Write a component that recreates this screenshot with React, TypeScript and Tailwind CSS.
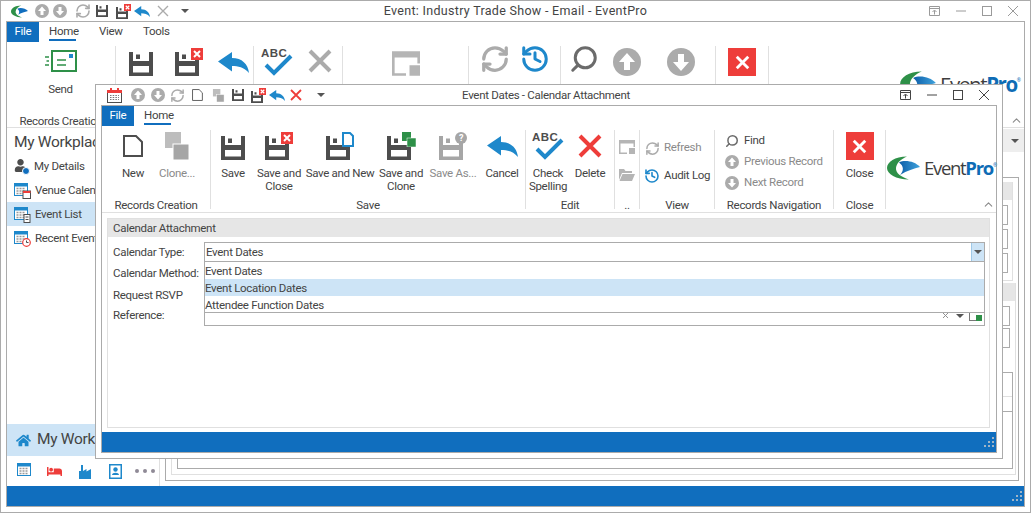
import React from 'react'
import { RefreshCw, History, Search, ChevronUp, X } from 'lucide-react'
import { FaBed, FaHome, FaUser } from 'react-icons/fa'

const BLUE = '#1e88cb'
const DARK = '#4d4d4d'
const GRAY = '#ababab'
const RED = '#ee3d3a'
const GREEN = '#2e9048'

/* ---------- icons ---------- */

function SaveIcon({ color = DARK, size = 24, className = '' }: { color?: string; size?: number; className?: string }) {
  return (
    <svg width={size} height={size} viewBox="0 0 24 24" className={className}>
      <path
        fillRule="evenodd"
        fill={color}
        d="M0 0H24V24H0Z M4 0V9H20V0Z M4 14V20.5H20V14Z"
      />
      <rect x="7" y="2.5" width="4" height="4.5" fill={color} />
    </svg>
  )
}

function SaveBadge({ badge, size = 24, color = DARK }: { badge: React.ReactNode; size?: number; color?: string }) {
  const wrap = size === 24 ? 'relative w-[28px] h-[28px] flex items-end' : 'relative w-[15px] h-[15px] flex items-end'
  return (
    <div className={wrap}>
      <SaveIcon size={size} color={color} />
      {badge}
    </div>
  )
}

function RedBox({ big = false }: { big?: boolean }) {
  const cls = big ? 'absolute right-0 top-0 w-[12px] h-[12px]' : 'absolute right-0 top-0 w-[7px] h-[7px]'
  return (
    <svg viewBox="0 0 12 12" className={cls}>
      <rect width="12" height="12" fill={RED} />
      <path d="M3 3L9 9M9 3L3 9" stroke="#fff" strokeWidth="2" />
    </svg>
  )
}

function CancelArrow({ w = 31, h = 21 }: { w?: number; h?: number }) {
  return (
    <svg width={w} height={h} viewBox="0 0 31 21">
      <path fill={BLUE} d="M0 9.500L14 0V6C24 6 30 12 31 21C26 15 20 14 14 14V19.500Z" />
    </svg>
  )
}

function CrossIcon({ color = RED, size = 24, stroke = 4 }: { color?: string; size?: number; stroke?: number }) {
  return (
    <svg width={size} height={size} viewBox="0 0 24 24">
      <path d="M2 2L22 22M22 2L2 22" stroke={color} strokeWidth={stroke} fill="none" />
    </svg>
  )
}

function CheckSpell() {
  return (
    <svg width="32" height="29" viewBox="0 0 32 29">
      <text x="0" y="10" fontFamily="'Liberation Sans', sans-serif" fontWeight="700" fontSize="11.5" letterSpacing="0.4" fill={DARK}>ABC</text>
      <path d="M5 18L13 26L30 9" stroke={BLUE} strokeWidth="4" fill="none" />
    </svg>
  )
}

function DocIcon({ size = 22, sw = 2 }: { size?: number; sw?: number }) {
  return (
    <svg width={(size * 20) / 22} height={size} viewBox="0 0 20 22">
      <path d="M1 1H13L19 7V21H1Z" stroke={DARK} strokeWidth={sw} fill="none" />
    </svg>
  )
}

function CloneIcon({ size = 28 }: { size?: number }) {
  return (
    <svg width={size} height={size} viewBox="0 0 24 28">
      <rect x="0" y="0" width="16" height="16" fill="#bdbdbd" />
      <rect x="8" y="12" width="16" height="16" fill="#a6a6a6" stroke="#fff" strokeWidth="1" />
    </svg>
  )
}

function RoundArrow({ up = true, size = 14 }: { up?: boolean; size?: number }) {
  return (
    <svg width={size} height={size} viewBox="0 0 14 14" className="shrink-0">
      <circle cx="7" cy="7" r="7" fill={GRAY} />
      <path fill="#fff" d={up ? 'M7 2.500L11 7H8.500V11H5.500V7H3Z' : 'M7 11.500L11 7H8.500V3H5.500V7H3Z'} />
    </svg>
  )
}

function WindowPane({ w = 16, h = 14 }: { w?: number; h?: number }) {
  return (
    <svg width={w} height={h} viewBox="0 0 16 14">
      <path fill="#b5b5b5" fillRule="evenodd" d="M0 0H16V7H14.500V3.500H1.500V12.500H8V14H0Z" />
      <rect x="10" y="8" width="6" height="6" fill="#b5b5b5" />
    </svg>
  )
}

function FolderIcon() {
  return (
    <svg width="16" height="13" viewBox="0 0 16 13">
      <path fill="#b5b5b5" d="M0 1H5L6.500 3H13V5H3L0 12Z M3.500 6H16L13 13H0.500Z" />
    </svg>
  )
}

function WinControls({ color, className = '' }: { color: string; className?: string }) {
  return (
    <div className={`flex items-center ${className}`}>
      <svg width="11" height="10" viewBox="0 0 11 10" className="mr-[16px]">
        <path d="M.5 .5H10.500V9.500H.5Z M.5 2.500H10.500 M5.500 8.500V4.500 M3.500 6L5.500 4L7.500 6" stroke={color} fill="none" />
      </svg>
      <svg width="10" height="2" viewBox="0 0 10 2" className="mr-[16px] w-[10px]">
        <path d="M0 1H10" stroke={color} />
      </svg>
      <svg width="10" height="10" viewBox="0 0 10 10" className="mr-[16px] w-[10px] h-[10px]">
        <rect x=".5" y=".5" width="9" height="9" stroke={color} fill="none" />
      </svg>
      <svg width="10" height="10" viewBox="0 0 10 10" className="w-[10px] h-[10px]">
        <path d="M0 0L10 10M10 0L0 10" stroke={color} fill="none" />
      </svg>
    </div>
  )
}

function CalIcon({ badge }: { badge?: 'date' | 'doc' | 'clock' }) {
  return (
    <svg width="17" height="16" viewBox="0 0 17 16">
      <rect x=".5" y=".5" width="13" height="12" fill="#fff" stroke={BLUE} />
      <rect x="1" y="1" width="12" height="2.500" fill={BLUE} />
      <path d="M2.500 5.500H11.500M2.500 8H11.500M2.500 10.500H11.500" stroke="#9a9a9a" strokeWidth="1.400" strokeDasharray="2 1" />
      {badge === 'date' && (
        <>
          <rect x="9" y="8" width="7.500" height="7.500" fill="#fff" stroke={DARK} />
          <rect x="9" y="8" width="7.500" height="2" fill={RED} />
        </>
      )}
      {badge === 'doc' && (
        <>
          <rect x="10" y="7.500" width="6" height="8" fill="#fff" stroke={DARK} />
          <path d="M11.500 10H14.500M11.500 12.500H14.500" stroke={DARK} />
        </>
      )}
      {badge === 'clock' && (
        <>
          <circle cx="12.500" cy="11.500" r="3.800" fill="#fff" stroke={RED} strokeWidth="1.200" />
          <path d="M12.500 9.500V11.500H14.500" stroke={DARK} fill="none" />
        </>
      )}
    </svg>
  )
}

function DialogCal() {
  return (
    <svg width="15" height="15" viewBox="0 0 15 15">
      <rect x=".5" y="2.500" width="14" height="12" fill="#fff" stroke={DARK} />
      <rect x="0" y="2" width="15" height="3" fill={RED} />
      <rect x="3" y="0" width="2" height="4" fill={RED} />
      <rect x="10" y="0" width="2" height="4" fill={RED} />
      <path d="M3 7.500H12M3 9.500H12M3 11.500H12" stroke="#777" strokeDasharray="1.500 1.200" />
    </svg>
  )
}

function Logo({ big = false }: { big?: boolean }) {
  return (
    <div className="flex items-center tracking-normal" style={{ fontFamily: "'Open Sans', sans-serif" }}>
      <svg width={big ? 36 : 33} height={big ? 26 : 24} viewBox="0 0 33 24">
        <defs>
          <linearGradient id={big ? 'lgb' : 'lgs'} x1="0" y1="0" x2="1" y2="0">
            <stop offset="0" stopColor="#0d5ea8" />
            <stop offset="1" stopColor="#3fa2dc" />
          </linearGradient>
        </defs>
        <path fill={GREEN} d="M20 .5C8 .5 0 6 0 12C0 18 9 23.500 22 23.500C14 21 8.500 17 9 12C9.500 7 14 3 20 .5Z" />
        <path fill={`url(#${big ? 'lgb' : 'lgs'})`} d="M12 6.500C18 3.500 28 5.500 33 11C27 12.500 20 14.500 13 19C17 15 17 10 12 6.500Z" />
      </svg>
      <span className={big ? 'ml-[4px] text-[20.5px] leading-none tracking-[-1.4px] text-[#3e3e3e]' : 'ml-[4px] text-[18.5px] leading-none tracking-[-1.3px] text-[#3e3e3e]'}>
        Event<span className="font-bold text-[#0e6cb5]">Pro</span>
      </span>
      <span className="text-[5px] self-start mt-[6px] text-[#0e6cb5]">®</span>
    </div>
  )
}

function ChevronArrow({ className = '' }: { className?: string }) {
  return <div className={`w-0 h-0 border-x-[4px] border-x-transparent border-t-[4px] border-t-[#555] ${className}`} />
}

/* ---------- ribbon parts ---------- */

function BigButton({ icon, label, width, disabled }: { icon: React.ReactNode; label?: React.ReactNode; width: string; disabled?: boolean }) {
  return (
    <div className={`flex flex-col items-center shrink-0 ${width}`}>
      <div className="h-[30px] flex items-end justify-center">{icon}</div>
      <div className={`mt-[7px] leading-[13px] text-center whitespace-nowrap ${disabled ? 'text-[#8a8a8a]' : ''}`}>{label}</div>
    </div>
  )
}

function Group({ label, width, children, noBorder }: { label?: string; width: string; children: React.ReactNode; noBorder?: boolean }) {
  return (
    <div className={`flex flex-col h-[79px] shrink-0 ${width} ${noBorder ? '' : 'border-r border-[#e0e0e0]'}`}>
      <div className="flex-1 flex min-h-0">{children}</div>
      <div className="h-[13px] leading-[13px] -mb-[3px] text-center whitespace-nowrap">{label}</div>
    </div>
  )
}

function SmallRow({ icon, label, disabled, h }: { icon: React.ReactNode; label: string; disabled?: boolean; h: string }) {
  return (
    <div className={`flex items-center ${h} ${disabled ? 'text-[#8a8a8a]' : ''}`}>
      <div className="w-[24px] flex justify-center shrink-0">{icon}</div>
      <span className="whitespace-nowrap">{label}</span>
    </div>
  )
}

function TabBar({ tabs }: { tabs: { label: string; w: string; active?: boolean }[] }) {
  return (
    <div className="flex h-[20px] shrink-0">
      <div className="w-[32px] bg-[#106ebe] text-white flex items-center justify-center">File</div>
      <div className="flex ml-[10px]">
        {tabs.map((t) => (
          <div key={t.label} className={`${t.w} flex flex-col items-start`}>
            <span className="leading-[18px] h-[17px]">{t.label}</span>
            {t.active && <div className="h-[2px] w-[27px] bg-[#106ebe]" />}
          </div>
        ))}
      </div>
    </div>
  )
}

/* ---------- background window ---------- */

function RedClose() {
  return (
    <div className="w-[28px] h-[28px] bg-[#ee3d3a] flex items-center justify-center">
      <X size={23} color="#fff" strokeWidth={3} strokeLinecap="butt" />
    </div>
  )
}

function OuterRibbon() {
  return (
    <div className="flex h-[86px] pt-[4px] shrink-0 border-b border-[#e0e0e0] relative">
      <Group label="Records Creation" width="w-[109px]">
        <BigButton
          width="w-[107px]"
          label="Send"
          icon={
            <svg width="32" height="22" viewBox="0 0 32 22" className="mb-[4px]">
              <rect x="7" y="1" width="24" height="20" fill="none" stroke={GREEN} strokeWidth="2" />
              <path d="M0 7H4M1.500 11H4M0 15H4M12 10H21M12 15H21" stroke={GREEN} strokeWidth="1.500" />
              <rect x="24" y="4" width="4" height="4" fill={BLUE} />
            </svg>
          }
        />
      </Group>
      <Group width="w-[138px]">
        <div className="pl-[2px] flex">
          <BigButton width="w-[46px]" icon={<SaveIcon />} />
          <BigButton width="w-[50px]" icon={<SaveBadge badge={<RedBox big />} />} />
          <BigButton width="w-[38px]" icon={<div className="mb-[3px]"><CancelArrow /></div>} />
        </div>
      </Group>
      <Group width="w-[89px]">
        <div className="flex">
          <BigButton width="w-[45px]" icon={<CheckSpell />} />
          <BigButton width="w-[41px]" icon={<div className="mb-[3px]"><CrossIcon color={GRAY} /></div>} />
        </div>
      </Group>
      <Group width="w-[126px]">
        <BigButton width="w-[125px]" icon={<WindowPane w={28} h={25} />} />
      </Group>
      <Group width="w-[92px]">
        <div className="pl-[11px] flex">
          <BigButton width="w-[30px]" icon={<RefreshCw size={30} color={GRAY} strokeWidth={2.6} className="mb-[2px]" />} />
          <BigButton width="w-[50px]" icon={<History size={30} color={BLUE} strokeWidth={2.4} className="mb-[2px]" />} />
        </div>
      </Group>
      <Group width="w-[155px]">
        <div className="flex pl-[7px]">
          <BigButton width="w-[32px]" icon={<Search size={30} color="#6b6b6b" strokeWidth={2.4} className="-scale-x-100 mb-[2px]" />} />
          <BigButton width="w-[54px]" icon={<RoundArrow size={28} />} />
          <BigButton width="w-[54px]" icon={<RoundArrow size={28} up={false} />} />
        </div>
      </Group>
      <Group width="w-[53px]">
        <BigButton width="w-[52px]" icon={<RedClose />} />
      </Group>
      <div className="ml-auto mr-[3px] mt-[25px]">
        <Logo big />
      </div>
      <ChevronUp size={13} color="#8a8a8a" strokeWidth={2} className="absolute right-[1px] top-[72px]" />
    </div>
  )
}

function NavRow({ children }: { children: React.ReactNode }) {
  return <div className="h-[24px] pt-[1px] flex items-center pl-[7px] whitespace-nowrap">{children}</div>
}

function OuterLeft() {
  return (
    <div className="w-[153px] shrink-0 flex flex-col border-r border-[#e0e0e0]">
      <div className="h-[26px] pl-[7px] text-[15.5px] leading-[28px] whitespace-nowrap">My Workplace</div>
      <NavRow>
        <div className="relative w-[16px] h-[16px] mr-[4px]">
          <FaUser size={13} color={DARK} />
          <div className="absolute right-0 bottom-0 w-[8px] h-[8px] rounded-full bg-[#106ebe] border border-white" />
        </div>
        My Details
      </NavRow>
      <NavRow>
        <div className="mr-[4px]"><CalIcon badge="date" /></div>Venue Calendar
      </NavRow>
      <div className="bg-[#cde4f6]">
        <NavRow>
          <div className="mr-[4px]"><CalIcon badge="doc" /></div>Event List
        </NavRow>
      </div>
      <NavRow>
        <div className="mr-[4px]"><CalIcon badge="clock" /></div>Recent Events
      </NavRow>
      <div className="flex-1" />
      <div className="h-[32px] bg-[#cde4f6] flex items-center pl-[9px] text-[15.5px] whitespace-nowrap">
        <FaHome size={15} color={BLUE} className="mr-[6px]" />
        My Workplace
      </div>
      <div className="h-[30px] flex items-center pl-[10px] bg-white">
        <CalIcon />
        <FaBed size={15} color={RED} className="ml-[13px]" />
        <svg width="12" height="15" viewBox="0 0 12 15" className="ml-[17px]">
          <path fill={BLUE} d="M0 15V7H2V1H4V7L7.500 5V7.500L12 5V15Z" />
        </svg>
        <svg width="14" height="15" viewBox="0 0 14 15" className="ml-[18px]">
          <rect x=".75" y=".75" width="11.500" height="13.500" fill="none" stroke={BLUE} strokeWidth="1.500" />
          <circle cx="6.500" cy="5.500" r="2.200" fill={BLUE} />
          <path d="M3 11C3 8 10 8 10 11Z" fill={BLUE} />
        </svg>
        <div className="flex gap-[4px] ml-[12px]">
          <div className="w-[4px] h-[4px] rounded-full bg-[#8f8a96]" />
          <div className="w-[4px] h-[4px] rounded-full bg-[#8f8a96]" />
          <div className="w-[4px] h-[4px] rounded-full bg-[#8f8a96]" />
        </div>
      </div>
    </div>
  )
}

function GhostField({ h, mt }: { h: string; mt: string }) {
  return <div className={`${h} ${mt} border border-[#ababab] shrink-0`} />
}

function OuterRight() {
  return (
    <div className="flex-1 min-w-0 flex flex-col pt-[1px]">
      <div className="h-[23px] shrink-0 bg-[#eeeeee] flex items-center justify-end pr-[5px]">
        <ChevronArrow />
      </div>
      <div className="flex-1 mt-[25px] ml-[5px] mr-[5px] mb-[5px] border border-[#ababab] flex flex-col min-h-0">
        <div className="h-[99px] mt-[4px] ml-[5px] mr-[5px] border-x border-b border-[#e0e0e0] flex flex-col shrink-0">
          <div className="h-[18px] bg-[#e6e6e6] shrink-0" />
          <div className="ml-[5px] mr-[4px] flex flex-col">
            <GhostField h="h-[20px]" mt="mt-[5px]" />
            <GhostField h="h-[20px]" mt="mt-[4px]" />
            <GhostField h="h-[20px]" mt="mt-[4px]" />
          </div>
        </div>
        <div className="flex-1 mt-[2px] ml-[5px] mr-[2px] mb-[5px] border-x border-b border-[#e0e0e0] flex flex-col min-h-0">
          <div className="h-[18px] bg-[#e6e6e6] shrink-0" />
          <div className="ml-[5px] mr-[5px] flex flex-col">
            <GhostField h="h-[20px]" mt="mt-[5px]" />
            <GhostField h="h-[20px]" mt="mt-[2px]" />
          </div>
          <div className="flex-1 mt-[24px] ml-[5px] mr-[2px] mb-[5px] border border-[#ababab] flex flex-col">
            <div className="h-[24px] border-b border-[#e0e0e0]" />
            <div className="h-[15px] border-b border-[#ababab]" />
          </div>
        </div>
      </div>
    </div>
  )
}

/* ---------- dialog ---------- */

function DialogRibbon() {
  return (
    <div className="flex h-[87px] pt-[4px] shrink-0 border-b border-[#e0e0e0] relative">
      <Group label="Records Creation" width="w-[109px]">
        <div className="flex pl-[9px]">
          <BigButton width="w-[44px]" label="New" icon={<div className="mb-[3px]"><DocIcon /></div>} />
          <BigButton width="w-[44px]" label="Clone..." disabled icon={<CloneIcon />} />
        </div>
      </Group>
      <Group label="Save" width="w-[315px]">
        <BigButton width="w-[44px]" label="Save" icon={<SaveIcon />} />
        <BigButton width="w-[48px]" label={<>Save and<br />Close</>} icon={<SaveBadge badge={<RedBox big />} />} />
        <BigButton
          width="w-[74px]"
          label="Save and New"
          icon={
            <SaveBadge
              badge={
                <svg width="12" height="15" viewBox="0 0 12 15" className="absolute right-0 top-0 bg-white">
                  <path d="M1 1H8L11 4V14H1Z" fill="#fff" stroke={BLUE} strokeWidth="2" />
                </svg>
              }
            />
          }
        />
        <BigButton
          width="w-[48px]"
          label={<>Save and<br />Clone</>}
          icon={
            <SaveBadge
              badge={
                <svg width="14" height="15" viewBox="0 0 14 15" className="absolute -right-[1px] top-0">
                  <rect width="9" height="9" fill={GREEN} />
                  <rect x="5" y="6" width="9" height="9" fill={GREEN} stroke="#fff" strokeWidth=".5" />
                </svg>
              }
            />
          }
        />
        <BigButton
          width="w-[56px]"
          label="Save As..."
          disabled
          icon={
            <SaveBadge
              color="#a6a6a6"
              badge={
                <div className="absolute right-0 top-0 w-[12px] h-[12px] rounded-full bg-[#a6a6a6] text-white text-[9px] leading-[12px] text-center font-bold">?</div>
              }
            />
          }
        />
        <BigButton width="w-[42px]" label="Cancel" icon={<div className="mb-[3px]"><CancelArrow /></div>} />
      </Group>
      <Group label="Edit" width="w-[89px]">
        <BigButton width="w-[44px]" label={<>Check<br />Spelling</>} icon={<CheckSpell />} />
        <BigButton width="w-[40px]" label="Delete" icon={<div className="mb-[2px]"><CrossIcon /></div>} />
      </Group>
      <Group label=".." width="w-[25px]">
        <div className="flex flex-col items-center w-full pt-[10px] gap-[14px]">
          <WindowPane />
          <FolderIcon />
        </div>
      </Group>
      <Group label="View" width="w-[75px]">
        <div className="flex flex-col pt-[8px] gap-[8px]">
          <SmallRow h="h-[20px]" disabled icon={<RefreshCw size={15} color={GRAY} strokeWidth={2.4} />} label="Refresh" />
          <SmallRow h="h-[20px]" icon={<History size={16} color={BLUE} strokeWidth={2.4} />} label="Audit Log" />
        </div>
      </Group>
      <Group label="Records Navigation" width="w-[119px]">
        <div className="flex flex-col pl-[5px]">
          <SmallRow h="h-[21px]" icon={<Search size={14} color="#6b6b6b" strokeWidth={2.6} className="-scale-x-100" />} label="Find" />
          <SmallRow h="h-[21px]" disabled icon={<RoundArrow />} label="Previous Record" />
          <SmallRow h="h-[21px]" disabled icon={<RoundArrow up={false} />} label="Next Record" />
        </div>
      </Group>
      <Group label="Close" width="w-[52px]">
        <BigButton width="w-[51px]" label="Close" icon={<RedClose />} />
      </Group>
      <div className="ml-[1px] mt-[26px] h-fit">
        <Logo />
      </div>
      <ChevronUp size={13} color="#8a8a8a" strokeWidth={2} className="absolute right-[1px] top-[72px]" />
    </div>
  )
}

function FormLabel({ children, h }: { children: React.ReactNode; h: string }) {
  return <div className={`w-[91px] pt-[1px] shrink-0 whitespace-nowrap flex items-center ${h}`}>{children}</div>
}

function CalendarPanel() {
  return (
    <div className="flex-1 mt-[5px] ml-[5px] mr-[6px] mb-[4px] border border-[#e0e0e0] flex flex-col min-h-0">
      <div className="h-[18px] bg-[#e6e6e6] pl-[5px] leading-[18px] shrink-0">Calendar Attachment</div>
      <div className="pt-[5px] pl-[5px] pr-[4px] flex flex-col">
        <div className="flex relative">
          <FormLabel h="h-[20px]">Calendar Type:</FormLabel>
          <div className="flex-1 h-[20px] border border-[#ababab] flex items-center pl-[1px] relative">
            <span className="flex-1 pt-[1px]">Event Dates</span>
            <div className="w-[13px] h-full bg-[#cde4f6] border-l border-[#9fc9e8] flex items-center justify-center">
              <ChevronArrow />
            </div>
          </div>
          {/* open dropdown list */}
          <div className="absolute left-[91px] right-0 top-[20px] h-[51px] bg-white border-x border-b border-[#ababab] z-10 flex flex-col">
            <div className="h-[17px] leading-[19px]">Event Dates</div>
            <div className="h-[17px] leading-[19px] bg-[#cde4f6]">Event Location Dates</div>
            <div className="h-[16px] leading-[18px]">Attendee Function Dates</div>
          </div>
        </div>
        <div className="flex">
          <FormLabel h="h-[23px]">Calendar Method:</FormLabel>
        </div>
        <div className="flex">
          <FormLabel h="h-[20px]">Request RSVP</FormLabel>
        </div>
        <div className="flex">
          <FormLabel h="h-[21px]">Reference:</FormLabel>
          <div className="flex-1 h-[21px] border border-[#ababab] flex items-center justify-end pr-[3px]">
            <X size={9} color="#8a8a8a" strokeWidth={2.5} className="mr-[6px]" />
            <ChevronArrow className="mr-[5px]" />
            <div className="relative w-[12px] h-[10px] border-l border-b border-[#777] border-t">
              <div className="absolute -right-[1px] -bottom-[1px] w-[6px] h-[6px] bg-[#2e9048]" />
            </div>
          </div>
        </div>
      </div>
    </div>
  )
}

function Grip() {
  const cells = ['', '', 'x', '', 'x', 'x', 'x', 'x', 'x']
  return (
    <div className="grid grid-cols-3 gap-[2px] mr-[1px]">
      {cells.map((c, i) => (
        <div key={i} className={c ? 'w-[2px] h-[2px] bg-[#9fb4c7]' : 'w-[2px] h-[2px]'} />
      ))}
    </div>
  )
}

function Dialog() {
  return (
    <div className="absolute left-[94px] top-[83px] w-[908px] h-[375px] bg-white border border-[#ababab] flex flex-col px-[5px] pb-[5px] z-20">
      <div className="h-[20px] flex items-center shrink-0">
        <div className="w-[239px] flex items-center shrink-0">
          <div className="ml-[6px]"><DialogCal /></div>
          <div className="ml-[9px]"><RoundArrow /></div>
          <div className="ml-[6px]"><RoundArrow up={false} /></div>
          <RefreshCw size={15} color={GRAY} strokeWidth={2.4} className="ml-[5px]" />
          <div className="ml-[7px] flex"><DocIcon size={12} sw={1.6} /></div>
          <div className="ml-[9px] flex"><CloneIcon size={13} /></div>
          <div className="ml-[7px] flex"><SaveIcon size={12} /></div>
          <div className="ml-[7px]"><SaveBadge size={12} badge={<RedBox />} /></div>
          <div className="ml-[3px] flex"><CancelArrow w={16} h={11} /></div>
          <div className="ml-[5px] flex"><CrossIcon size={12} stroke={3.600} /></div>
          <ChevronArrow className="ml-[15px]" />
        </div>
        <div className="flex-1 pt-[1px] text-center whitespace-nowrap">Event Dates - Calendar Attachment</div>
        <div className="w-[245px] shrink-0 flex justify-end pr-[8px]">
          <WinControls color="#444" />
        </div>
      </div>
      <div className="flex-1 border border-[#ababab] flex flex-col min-h-0">
        <TabBar tabs={[{ label: 'Home', w: 'w-[30px]', active: true }]} />
        <DialogRibbon />
        <CalendarPanel />
        <div className="h-[20px] bg-[#106ebe] shrink-0 flex items-center justify-end pr-[1px]">
          <Grip />
        </div>
      </div>
    </div>
  )
}

/* ---------- page ---------- */

export default function App() {
  return (
    <div
      className="relative w-[1031px] h-[513px] bg-white overflow-hidden border border-[#ababab] flex flex-col px-[5px] pb-[5px] text-[11.5px] tracking-[-0.3px] text-[#444]"
      style={{ fontFamily: "Roboto, 'Noto Sans', sans-serif" }}
    >
      <div className="h-[20px] flex items-center shrink-0">
        <div className="w-[194px] flex items-center shrink-0">
          <svg width="17" height="13" viewBox="0 0 33 24" className="ml-[5px]">
            <path fill={GREEN} d="M20 .5C8 .5 0 6 0 12C0 18 9 23.500 22 23.500C14 21 8.500 17 9 12C9.500 7 14 3 20 .5Z" />
            <path fill="#106ebe" d="M12 6.500C18 3.500 28 5.500 33 11C27 12.500 20 14.500 13 19C17 15 17 10 12 6.500Z" />
          </svg>
          <div className="ml-[7px]"><RoundArrow /></div>
          <div className="ml-[4px]"><RoundArrow up={false} /></div>
          <RefreshCw size={16} color={GRAY} strokeWidth={2.4} className="ml-[8px]" />
          <div className="ml-[5px] flex"><SaveIcon size={12} /></div>
          <div className="ml-[8px]"><SaveBadge size={12} badge={<RedBox />} /></div>
          <div className="ml-[3px] flex"><CancelArrow w={16} h={11} /></div>
          <div className="ml-[7px] flex"><CrossIcon size={12} color={GRAY} stroke={2.800} /></div>
          <ChevronArrow className="ml-[12px]" />
        </div>
        <div className="flex-1 pl-[6px] text-center whitespace-nowrap text-[12.5px] tracking-[0.3px]">Event: Industry Trade Show - Email - EventPro</div>
        <div className="w-[200px] shrink-0 flex justify-end pr-[7px]">
          <WinControls color="#9a9a9a" />
        </div>
      </div>
      <div className="flex-1 border border-[#ababab] flex flex-col min-h-0">
        <TabBar
          tabs={[
            { label: 'Home', w: 'w-[50px]', active: true },
            { label: 'View', w: 'w-[44px]' },
            { label: 'Tools', w: 'w-[30px]' },
          ]}
        />
        <OuterRibbon />
        <div className="flex-1 flex min-h-0">
          <OuterLeft />
          <OuterRight />
        </div>
        <div className="h-[20px] bg-[#106ebe] shrink-0 flex items-center justify-end pr-[1px]">
          <Grip />
        </div>
      </div>
      <Dialog />
    </div>
  )
}
